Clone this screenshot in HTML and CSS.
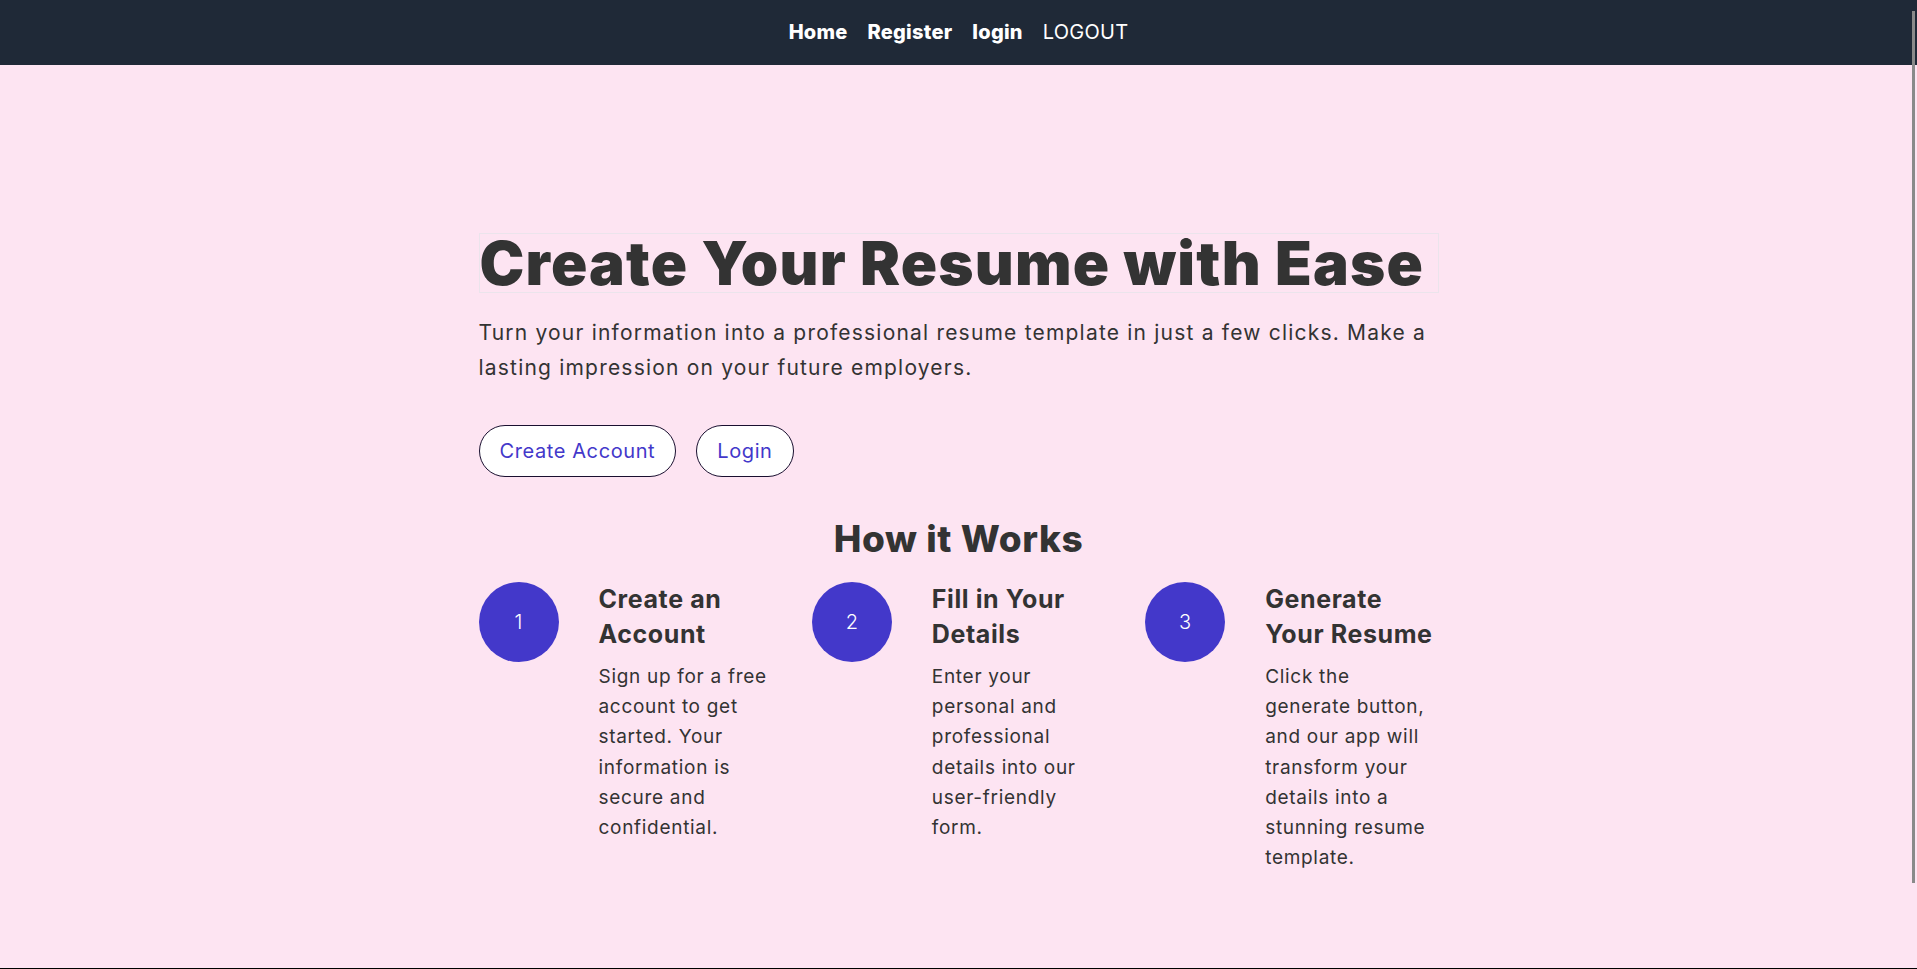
FILE: index.html
```html
<!DOCTYPE html>
<html lang="en">
<head>
<meta charset="utf-8">
<title>Resume Builder</title>
<link rel="stylesheet" href="styles.css">
</head>
<body>
<nav class="topnav">
  <a class="nav-link" href="#">Home</a>
  <a class="nav-link" href="#">Register</a>
  <a class="nav-link" href="#">login</a>
  <a class="nav-link nav-logout" href="#">LOGOUT</a>
</nav>
<main class="hero">
  <div class="container">
    <h1 class="hero-title">Create Your Resume with Ease</h1>
    <p class="hero-text">Turn your information into a professional resume template in just a few clicks. Make a lasting impression on your future employers.</p>
    <div class="actions">
      <a class="pill-btn" href="#">Create Account</a>
      <a class="pill-btn" href="#">Login</a>
    </div>
    <h2 class="section-title">How it Works</h2>
    <div class="steps">
      <div class="step">
        <div class="step-num">1</div>
        <div class="step-body">
          <h3 class="step-title">Create an Account</h3>
          <p class="step-text">Sign up for a free account to get started. Your information is secure and confidential.</p>
        </div>
      </div>
      <div class="step">
        <div class="step-num">2</div>
        <div class="step-body">
          <h3 class="step-title">Fill in Your Details</h3>
          <p class="step-text">Enter your personal and professional details into our user-friendly form.</p>
        </div>
      </div>
      <div class="step">
        <div class="step-num">3</div>
        <div class="step-body">
          <h3 class="step-title">Generate Your Resume</h3>
          <p class="step-text">Click the generate button, and our app will transform your details into a stunning resume template.</p>
        </div>
      </div>
    </div>
  </div>
</main>
<div class="scroll-thumb"></div>
<div class="frame-bottom"></div>
</body>
</html>
```

FILE: styles.css
```css
* { box-sizing: border-box; }
html, body { margin: 0; padding: 0; }
body {
  background: #fde4f2;
  font-family: Inter, "Noto Sans", sans-serif;
  color: #333333;
  min-height: 100vh;
  overflow: hidden;
}
.topnav {
  height: 65px;
  background: #1f2937;
  display: flex;
  justify-content: center;
  align-items: center;
  gap: 20px;
  padding-bottom: 2px;
}
.nav-link {
  color: #ffffff;
  text-decoration: none;
  font-weight: 800;
  font-size: 20px;
  letter-spacing: 0.25px;
}
.nav-logout {
  font-weight: 400;
}
.hero {
  padding-top: 168px;
}
.container {
  width: 960px;
  margin: 0 auto;
}
.hero-title {
  margin: 0;
  display: block;
  white-space: nowrap;
  border: 1px solid #ebe4ec;
  font-size: 60px;
  line-height: 58px;
  font-weight: 900;
  letter-spacing: 1.2px;
  color: #333333;
}
.hero-text {
  margin: 22px 0 0;
  font-size: 21px;
  line-height: 35px;
  letter-spacing: 1.2px;
  color: #333333;
}
.actions {
  display: flex;
  gap: 20px;
  margin-top: 40px;
}
.pill-btn {
  display: inline-flex;
  align-items: center;
  height: 52px;
  padding: 0 20px;
  background: #ffffff;
  border: 1px solid #1a1030;
  border-radius: 999px;
  color: #4338ca;
  text-decoration: none;
  font-size: 20px;
  letter-spacing: 0.6px;
}
.section-title {
  margin: 42px 0 0;
  text-align: center;
  font-size: 37px;
  line-height: 40px;
  font-weight: 800;
  letter-spacing: 0.6px;
  color: #333333;
}
.steps {
  display: grid;
  grid-template-columns: repeat(3, 1fr);
  gap: 40px;
  margin-top: 23px;
}
.step {
  display: flex;
  gap: 40px;
  align-items: flex-start;
}
.step-num {
  flex: 0 0 80px;
  width: 80px;
  height: 80px;
  border-radius: 50%;
  background: #4338ca;
  color: #ffffff;
  display: flex;
  align-items: center;
  justify-content: center;
  font-size: 20px;
  font-weight: 300;
}
.step-title {
  margin: 0 0 10px;
  font-size: 25px;
  line-height: 35px;
  font-weight: 700;
  letter-spacing: 0.6px;
  color: #333333;
}
.step-text {
  margin: 0;
  font-size: 19px;
  line-height: 30.2px;
  letter-spacing: 0.7px;
  color: #333333;
}
.scroll-thumb {
  position: fixed;
  left: 1912px;
  top: 11px;
  width: 3px;
  height: 872px;
  background: #8a8a8a;
}
.frame-bottom {
  position: fixed;
  left: 0;
  right: 0;
  bottom: 0;
  height: 1px;
  background: #000000;
}
```
